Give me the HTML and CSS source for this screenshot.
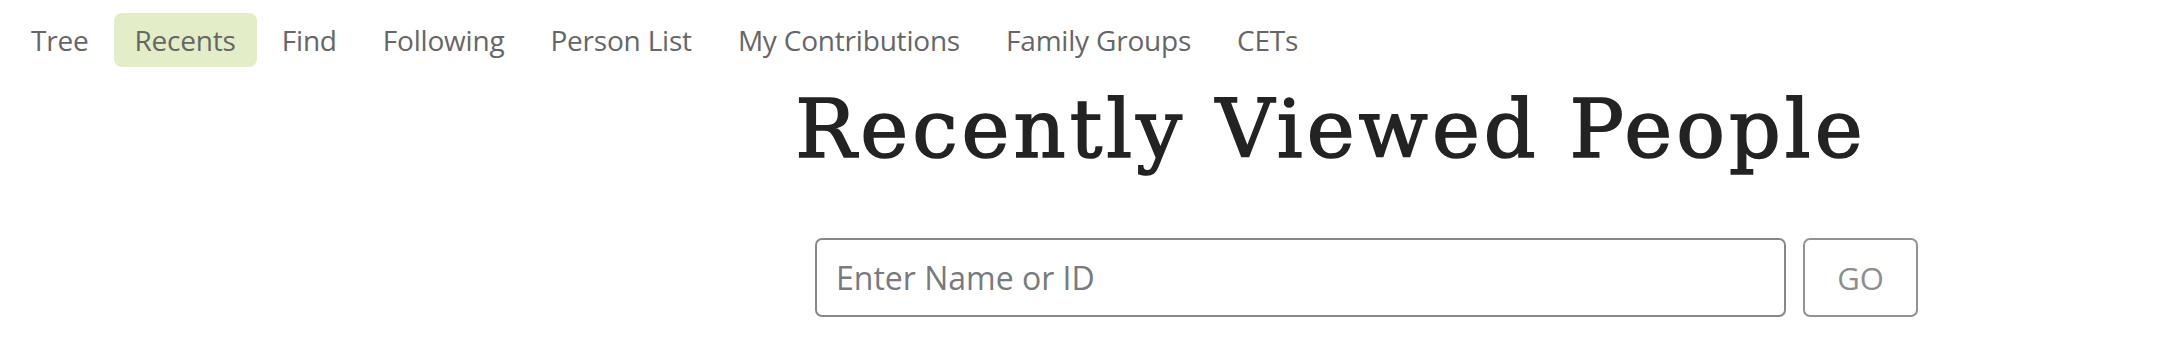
FILE: index.html
```html
<!DOCTYPE html>
<html lang="en">
<head>
<meta charset="utf-8">
<title>Recently Viewed People</title>
<link rel="stylesheet" href="styles.css">
</head>
<body>
<nav class="tabs">
  <a class="tab" href="#">Tree</a>
  <a class="tab active" href="#">Recents</a>
  <a class="tab" href="#">Find</a>
  <a class="tab" href="#">Following</a>
  <a class="tab" href="#">Person List</a>
  <a class="tab" href="#">My Contributions</a>
  <a class="tab" href="#">Family Groups</a>
  <a class="tab" href="#">CETs</a>
</nav>
<div class="layout">
  <aside class="sidebar"></aside>
  <main class="main">
    <h1 class="title">Recently Viewed People</h1>
    <form class="search">
      <input class="search-input" type="text" placeholder="Enter Name or ID">
      <button class="search-go" type="button">GO</button>
    </form>
  </main>
</div>
</body>
</html>
```
FILE: styles.css
```css
html, body {
  margin: 0;
  padding: 0;
  background: #fff;
}
body {
  font-family: "Open Sans", "Noto Sans", sans-serif;
}
.tabs {
  display: flex;
  gap: 4px;
  padding: 13px 0 0 10px;
}
.tab {
  display: flex;
  align-items: center;
  height: 54px;
  padding: 0 21px;
  border-radius: 8px;
  font-size: 28px;
  color: #666666;
  text-decoration: none;
  letter-spacing: -0.2px;
}
.tab.active {
  background: #e3eec8;
}
.layout {
  display: flex;
}
.sidebar {
  width: 480px;
  flex: none;
}
.main {
  flex: 1;
}
.title {
  margin: 12px 0 0;
  font-family: "DejaVu Serif", "Liberation Serif", serif;
  font-weight: normal;
  font-size: 81px;
  line-height: 100px;
  letter-spacing: 4px;
  -webkit-text-stroke: 1.6px #222322;
  color: #222322;
  text-align: center;
}
.search {
  display: flex;
  gap: 17px;
  margin: 59px 0 0 335px;
  width: 1103px;
}
.search-input {
  flex: 1;
  height: 79px;
  box-sizing: border-box;
  border: 2px solid #86898c;
  border-radius: 7px;
  padding: 0 19px;
  font-family: "Open Sans", "Noto Sans", sans-serif;
  font-size: 32px;
  color: #333;
  outline: none;
}
.search-input::placeholder {
  color: #777a7e;
}
.search-go {
  width: 115px;
  height: 79px;
  box-sizing: border-box;
  border: 2px solid #909396;
  border-radius: 7px;
  background: #fff;
  font-family: "Open Sans", "Noto Sans", sans-serif;
  font-size: 31px;
  color: #8a8d91;
}
```
